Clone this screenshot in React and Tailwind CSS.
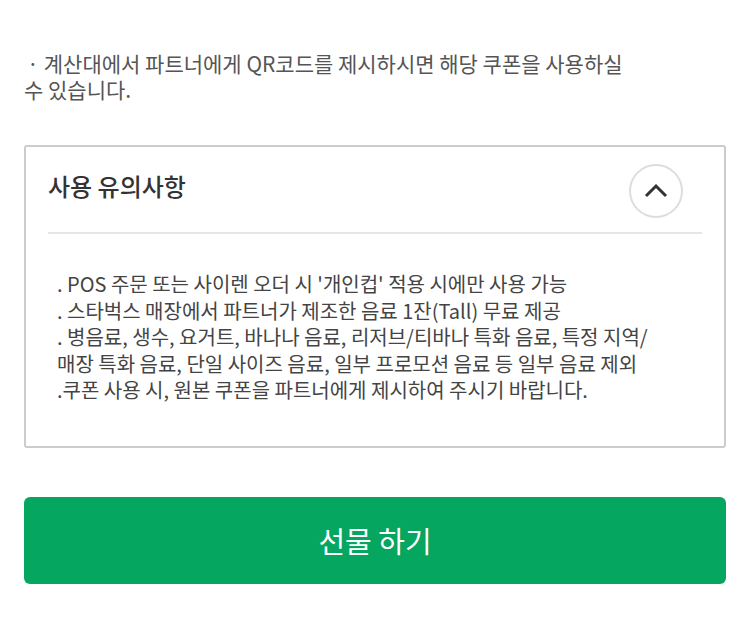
import { useState } from "react";

export default function App() {
  const [open, setOpen] = useState(true);

  return (
    <div
      className="w-[750px] h-[633px] bg-white px-6 pt-[50px]"
      style={{ fontFamily: '"Noto Sans CJK KR", "Noto Sans", sans-serif' }}
    >
      {/* Notice */}
      <p className="text-[21px] leading-[26px] text-[#555555]">
        <span className="pl-[3px] pr-[5px]">·</span>계산대에서 파트너에게 QR코드를 제시하시면 해당 쿠폰을 사용하실
        <br />
        수 있습니다.
      </p>

      {/* Usage notes */}
      <div className="mt-[43px] h-[303px] border-2 border-[#cccccc] rounded-[3px] px-[22px]">
        <div className="flex items-center justify-between pt-[17px] pb-[14px] border-b-2 border-[#e6e6e6]">
          <h2 className="mb-[10px] text-[24px] font-medium text-[#333333]">사용 유의사항</h2>
          <button
            onClick={() => setOpen(!open)}
            className="w-[54px] h-[54px] rounded-full border-2 border-[#dddddd] flex items-center justify-center mr-[19px]"
          >
            <svg width="24" height="16" viewBox="0 0 24 16" className={open ? "" : "rotate-180"}>
              <path d="M2 13 L12 3 L22 13" fill="none" stroke="#333333" strokeWidth="3" />
            </svg>
          </button>
        </div>
        {open && (
          <p className="pt-[37px] pl-[9px] text-[20px] leading-[26.5px] text-[#444444]">
            . POS 주문 또는 사이렌 오더 시 '개인컵' 적용 시에만 사용 가능
            <br />
            . 스타벅스 매장에서 파트너가 제조한 음료 1잔(Tall) 무료 제공
            <br />
            . 병음료, 생수, 요거트, 바나나 음료, 리저브/티바나 특화 음료, 특정 지역/
            <br />
            매장 특화 음료, 단일 사이즈 음료, 일부 프로모션 음료 등 일부 음료 제외
            <br />
            .쿠폰 사용 시, 원본 쿠폰을 파트너에게 제시하여 주시기 바랍니다.
          </p>
        )}
      </div>

      {/* Gift button */}
      <button className="mt-[49px] w-full h-[87px] rounded-[6px] bg-[#04a660] text-white text-[29px] font-normal flex items-center justify-center">
        선물 하기
      </button>
    </div>
  );
}
